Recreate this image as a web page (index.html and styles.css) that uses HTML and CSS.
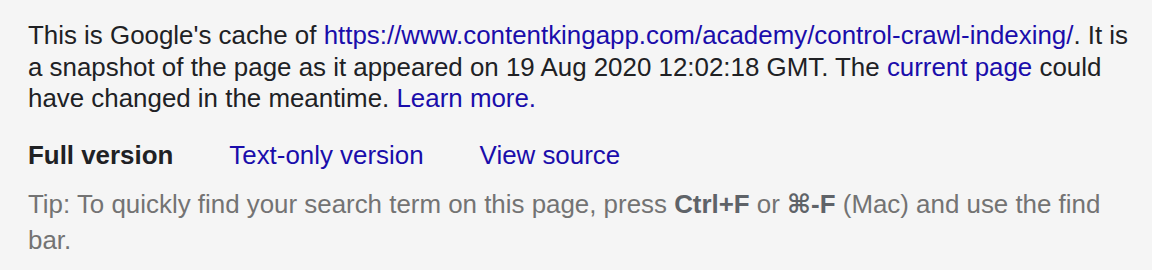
FILE: index.html
```html
<!DOCTYPE html>
<html lang="en">
<head>
<meta charset="utf-8">
<title>Google cache</title>
<link rel="stylesheet" href="styles.css">
</head>
<body>
<div class="cache-header">
  <p class="notice">This is Google's cache of <a href="#">https://www.contentkingapp.com/academy/control-crawl-indexing/</a>. It is a snapshot of the page as it appeared on 19 Aug 2020 12:02:18 GMT. The <a href="#">current page</a> could have changed in the meantime. <a href="#">Learn more.</a></p>
  <nav class="versions">
    <span class="current">Full version</span>
    <a href="#">Text-only version</a>
    <a href="#">View source</a>
  </nav>
  <p class="tip">Tip: To quickly find your search term on this page, press <b>Ctrl+F</b> or <b>⌘-F</b> (Mac) and use the find bar.</p>
</div>
</body>
</html>
```
FILE: styles.css
```css
html, body {
  margin: 0;
  padding: 0;
  background: #f5f5f5;
}
.cache-header {
  font-family: "Liberation Sans", Arial, "DejaVu Sans", sans-serif;
  font-size: 25.9px;
  color: #202124;
  padding: 20px 14px 0 28px;
}
.cache-header a {
  color: #1a0dab;
  text-decoration: none;
}
.notice {
  margin: 0;
  line-height: 31.5px;
}
.versions {
  display: flex;
  gap: 56px;
  margin-top: 25px;
  line-height: 31px;
}
.current {
  font-weight: bold;
  color: #202124;
}
.tip {
  margin: 15px 0 0;
  line-height: 36px;
  color: #737373;
}
.tip b {
  color: #5f6368;
}
```
